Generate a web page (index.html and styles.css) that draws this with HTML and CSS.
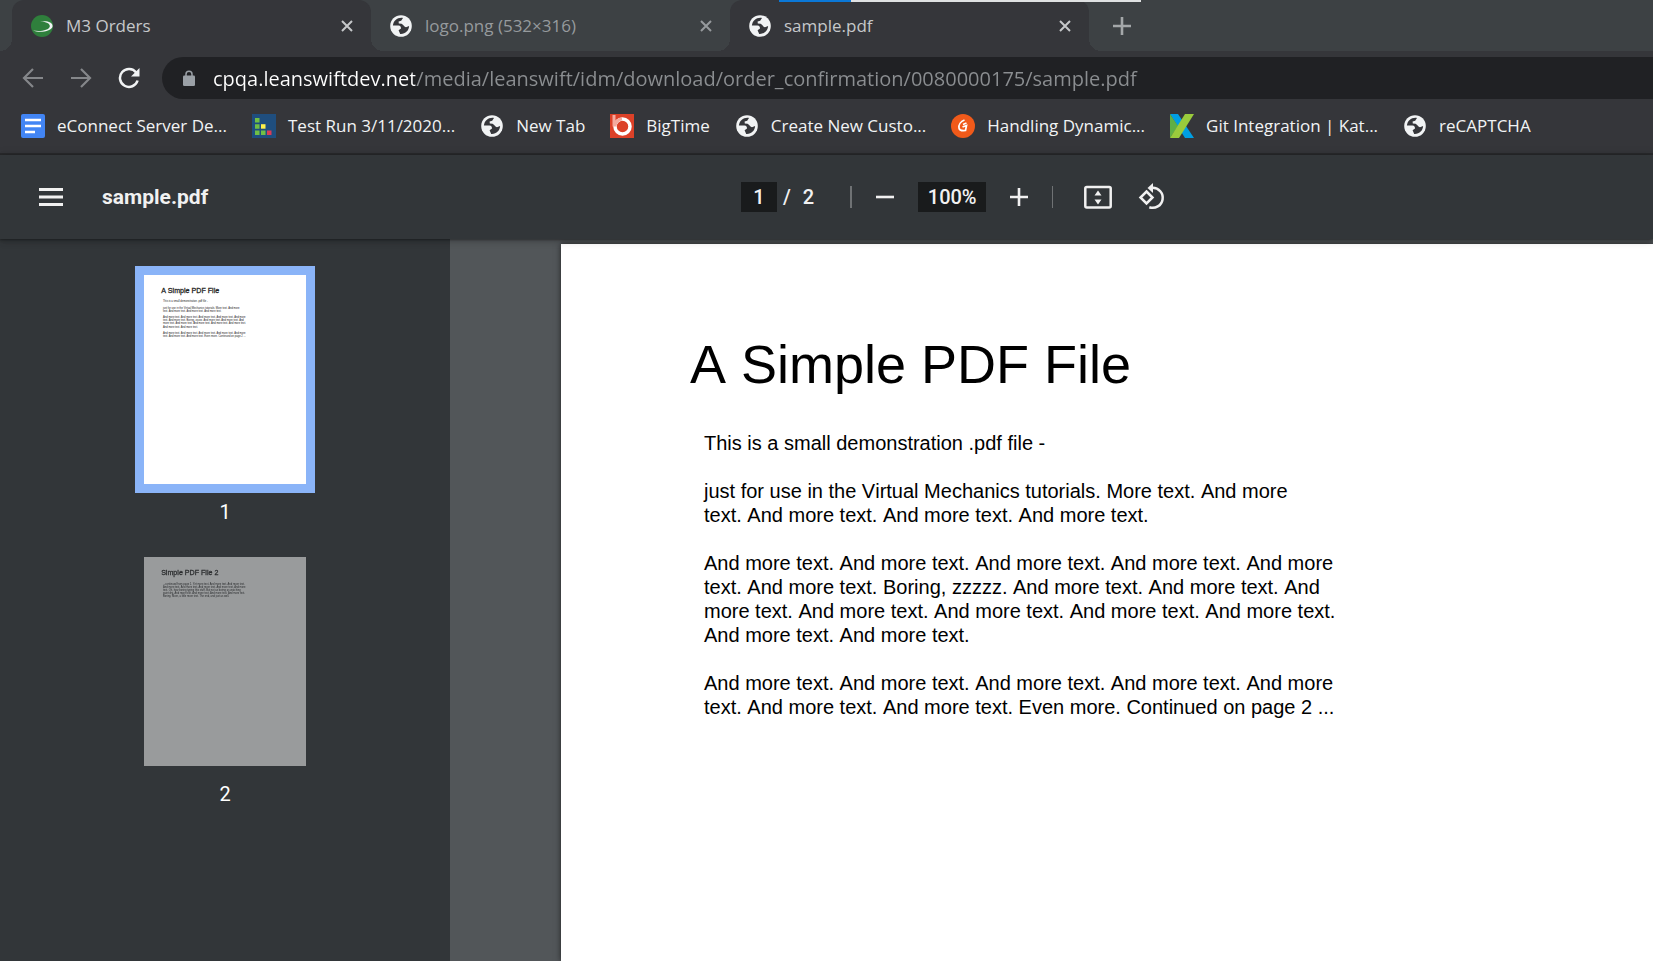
FILE: index.html
```html
<!DOCTYPE html>
<html lang="en">
<head>
<meta charset="utf-8">
<title>sample.pdf</title>
<link rel="stylesheet" href="styles.css">
</head>
<body>
<svg class="defs" aria-hidden="true">
  <symbol id="globe" viewBox="0 0 22 22">
    <circle cx="11" cy="11" r="10.8" fill="#f1f3f4"/>
    <path d="M13 2.900C7.500 2.200 3.500 5.500 2.900 10.600L8.500 10.600C10.500 10.800 11 12 11 13.600L8.600 15.200L10.200 18.900C15.200 19.300 19 15.500 19.100 11L16 12.300C14.200 12.300 13.600 9.600 11.600 8.800L8.800 8.400L8.600 6.600L11.200 5.800Z" fill="#35363a"/>
  </symbol>
  <symbol id="close" viewBox="0 0 12 12"><path d="M1 1 11 11M11 1 1 11" stroke="currentColor" stroke-width="2" fill="none"/></symbol>
</svg>

<header class="browser">
  <div class="progress" aria-hidden="true"><span class="progress-fill"></span></div>
  <nav class="tabs" aria-label="Tabs">
    <div class="tab tab-on">
      <svg class="favicon" viewBox="0 0 22 22"><circle cx="11" cy="11" r="11" fill="#2f7f3c"/><path d="M2 15.5C9 16.8 18 15.5 18.8 11.5C19.200 8 14 6.500 9 6.800C15 5.300 21.800 7 21.600 11.200C21.200 16 9 18.300 2 15.500Z" fill="#f1f3f4"/></svg>
      <span class="tab-title">M3 Orders</span>
      <button class="tab-close" aria-label="Close M3 Orders"><svg><use href="#close"/></svg></button>
    </div>
    <div class="tab tab-off">
      <svg class="favicon"><use href="#globe"/></svg>
      <span class="tab-title">logo.png (532×316)</span>
      <button class="tab-close" aria-label="Close logo.png"><svg><use href="#close"/></svg></button>
    </div>
    <div class="tab tab-on">
      <svg class="favicon"><use href="#globe"/></svg>
      <span class="tab-title">sample.pdf</span>
      <button class="tab-close" aria-label="Close sample.pdf"><svg><use href="#close"/></svg></button>
    </div>
    <button class="new-tab" aria-label="New tab"><svg viewBox="0 0 18 18"><path d="M9 0V18M0 9H18" stroke="currentColor" stroke-width="2.600"/></svg></button>
  </nav>

  <div class="address-row">
    <button class="nav-btn dim" aria-label="Back"><svg viewBox="0 0 22 22"><path d="M21 11H2.500M11 2 2 11 11 20" fill="none" stroke="currentColor" stroke-width="2.200"/></svg></button>
    <button class="nav-btn dim" aria-label="Forward"><svg viewBox="0 0 22 22"><path d="M1 11H19.500M11 2 20 11 11 20" fill="none" stroke="currentColor" stroke-width="2.200"/></svg></button>
    <button class="nav-btn" aria-label="Reload"><svg viewBox="0 0 22 22"><path d="M18.200 5.500A9 9 0 1 0 19.600 13.500" fill="none" stroke="currentColor" stroke-width="2.500"/><path d="M21.500 1V9.500H13Z" fill="currentColor"/></svg></button>
    <div class="omnibox">
      <svg class="lock" viewBox="0 0 12 16"><path d="M3 7V4.200a3 3 0 0 1 6 0V7" fill="none" stroke="#9aa0a6" stroke-width="1.500"/><rect y="5.500" width="12" height="10.500" rx="1.300" fill="#9aa0a6"/></svg>
      <input class="url" type="text" aria-label="Address" value="cpqa.leanswiftdev.net/media/leanswift/idm/download/order_confirmation/0080000175/sample.pdf">
    </div>
  </div>

  <nav class="bookmarks" aria-label="Bookmarks">
    <a class="bookmark" href="#"><svg viewBox="0 0 24 24"><rect width="24" height="24" rx="2" fill="#4285f4"/><path d="M4 6H20M4 12H20M4 18H14" stroke="#fff" stroke-width="2.600"/></svg><span>eConnect Server De...</span></a>
    <a class="bookmark" href="#"><svg viewBox="0 0 24 24"><path d="M0 0H24V24H0Z" fill="#1f4e7e"/><path d="M3 4h4.500v4.500H3ZM3 10.200h4.500v4.500H3ZM3 16.500h4.500V21H3ZM9 16.500h4.500V21H9Z" fill="#71bf44"/><path d="M9 10.200h4.500v4.500H9Z" fill="#fdf04b"/><path d="M15 16.500h4.500V21H15Z" fill="#dc3c55"/></svg><span>Test Run 3/11/2020...</span></a>
    <a class="bookmark" href="#"><svg viewBox="-1 -1 24 24"><use href="#globe" width="22" height="22"/></svg><span>New Tab</span></a>
    <a class="bookmark" href="#"><svg viewBox="0 0 24 24"><path d="M0 0H24V24H0Z" fill="#dc4128"/><circle cx="12.500" cy="12.500" r="7.500" fill="none" stroke="#fff" stroke-width="3.500"/><path d="M4 1V12.500M5 12.500A7.500 7.500 0 0 1 12 5" fill="none" stroke="#f4aa9e" stroke-width="3"/></svg><span>BigTime</span></a>
    <a class="bookmark" href="#"><svg viewBox="-1 -1 24 24"><use href="#globe" width="22" height="22"/></svg><span>Create New Custo...</span></a>
    <a class="bookmark" href="#"><svg viewBox="0 0 24 24"><circle cx="12" cy="12" r="12" fill="#f05a1a"/><path d="M13.500 6C9.500 7.500 7.500 11 8 14C8.500 17 12 16.800 14.500 16.500L15.500 11.500L11.500 13M12 10.500 15.500 9" fill="none" stroke="#fff" stroke-width="1.700"/></svg><span>Handling Dynamic...</span></a>
    <a class="bookmark" href="#"><svg viewBox="0 0 24 24"><path d="M0 0H8L24 24H15Z" fill="#009fe3"/><path d="M0 0 8 12 0 24Z" fill="#5faf46"/><path d="M15 0H24L9 24H0Z" fill="#9acb3c"/></svg><span>Git Integration | Kat...</span></a>
    <a class="bookmark" href="#"><svg viewBox="-1 -1 24 24"><use href="#globe" width="22" height="22"/></svg><span>reCAPTCHA</span></a>
  </nav>
</header>

<div class="pdf-bar">
  <div class="pdf-name">
    <button class="icon-btn" aria-label="Menu"><svg class="icon-24" viewBox="0 0 24 18"><path d="M0 1.500H24M0 9H24M0 16.500H24" stroke="currentColor" stroke-width="3"/></svg></button>
    <h1>sample.pdf</h1>
  </div>
  <div class="pager">
    <input class="field page-field" type="text" aria-label="Page number" value="1">
    <span>/</span><span class="page-count">2</span>
  </div>
  <span class="rule rule-wide"></span>
  <div class="zoomer">
    <button class="icon-btn" aria-label="Zoom out"><svg class="icon-18" viewBox="0 0 18 18"><path d="M0 9H18" stroke="currentColor" stroke-width="2.600"/></svg></button>
    <input class="field zoom-field" type="text" aria-label="Zoom level" value="100%">
    <button class="icon-btn" aria-label="Zoom in"><svg class="icon-18" viewBox="0 0 18 18"><path d="M0 9H18M9 0V18" stroke="currentColor" stroke-width="2.600"/></svg></button>
  </div>
  <span class="rule"></span>
  <div class="fitters">
    <button class="icon-btn" aria-label="Fit to page"><svg class="icon-28" viewBox="0 0 28 28"><rect x="1.300" y="4" width="25.400" height="20.500" rx="1.500" fill="none" stroke="currentColor" stroke-width="2.500"/><path d="M14 7.500 17.500 12.500H10.500ZM14 21.500 17.500 16.500H10.500Z" fill="currentColor"/></svg></button>
    <button class="icon-btn" aria-label="Rotate"><svg class="icon-28" viewBox="0 0 28 28"><path d="M8.500 8.500 14.500 14.500 8.500 20.500 2.500 14.500ZM14.500 4.800A10 10 0 1 1 11.300 24.200" fill="none" stroke="currentColor" stroke-width="2.500"/><path d="M15 0V10L9.500 5Z" fill="currentColor"/></svg></button>
  </div>
</div>

<div class="viewer">
  <aside class="thumbs" aria-label="Pages">
    <button class="thumb thumb-on" aria-label="Page 1">
      <svg class="sheet" viewBox="0 0 612 792">
        <text class="sheet-head" x="64" y="70" font-size="27">A Simple PDF File</text>
        <g font-size="10">
          <text x="71" y="103">This is a small demonstration .pdf file -</text>
          <text x="71" y="127">just for use in the Virtual Mechanics tutorials. More text. And more</text>
          <text x="71" y="139">text. And more text. And more text. And more text.</text>
          <text x="71" y="163">And more text. And more text. And more text. And more text. And more</text>
          <text x="71" y="175">text. And more text. Boring, zzzzz. And more text. And more text. And</text>
          <text x="71" y="187">more text. And more text. And more text. And more text. And more text.</text>
          <text x="71" y="199">And more text. And more text.</text>
          <text x="71" y="223">And more text. And more text. And more text. And more text. And more</text>
          <text x="71" y="235">text. And more text. And more text. Even more. Continued on page 2 ...</text>
        </g>
      </svg>
    </button>
    <span class="thumb-no">1</span>
    <button class="thumb thumb-off" aria-label="Page 2">
      <svg class="sheet" viewBox="0 0 612 792">
        <text class="sheet-head" x="64" y="70" font-size="27">Simple PDF File 2</text>
        <g font-size="10">
          <text x="71" y="105">...continued from page 1. Yet more text. And more text. And more text.</text>
          <text x="71" y="117">And more text. And more text. And more text. And more text. And more</text>
          <text x="71" y="129">text. Oh, how boring typing this stuff. But not as boring as watching</text>
          <text x="71" y="141">paint dry. And more text. And more text. And more text. And more text.</text>
          <text x="71" y="153">Boring. More, a little more text. The end, and just as well.</text>
        </g>
      </svg>
    </button>
    <span class="thumb-no">2</span>
  </aside>
  <main class="canvas">
    <article class="page">
      <h2>A Simple PDF File</h2>
      <p>This is a small demonstration .pdf file -</p>
      <p>just for use in the Virtual Mechanics tutorials. More text. And more<br>text. And more text. And more text. And more text.</p>
      <p>And more text. And more text. And more text. And more text. And more<br>text. And more text. Boring, zzzzz. And more text. And more text. And<br>more text. And more text. And more text. And more text. And more text.<br>And more text. And more text.</p>
      <p>And more text. And more text. And more text. And more text. And more<br>text. And more text. And more text. Even more. Continued on page 2 ...</p>
    </article>
  </main>
</div>
</body>
</html>
```
FILE: styles.css
```css
* { box-sizing: border-box; }
body {
  margin: 0;
  min-height: 100vh;
  display: flex;
  flex-direction: column;
  overflow: hidden;
  background: #525659;
  font-family: "Open Sans", "Noto Sans", sans-serif;
}
button, input { font: inherit; color: inherit; border: 0; padding: 0; background: none; }
button { display: flex; align-items: center; justify-content: center; }
.defs { display: none; }

.browser {
  position: relative;
  background: #35363a;
  border-bottom: 2px solid #292a2c;
}
.progress {
  position: absolute;
  top: 0;
  left: 779px;
  width: 362px;
  height: 2px;
  background: #dfe1e2;
  z-index: 2;
}
.progress-fill { display: block; width: 20%; height: 2px; background: #0b78d7; }

.tabs { display: flex; height: 51px; padding-left: 12px; background: #3d4144; }
.tab {
  position: relative;
  display: flex;
  align-items: center;
  gap: 13px;
  width: 359px;
  padding: 0 18px 0 19px;
  color: #c6c8ca;
  font-size: 17px;
}
.tab-on { background: #35363a; border-radius: 12px 12px 0 0; }
.tab-on::before, .tab-on::after {
  content: "";
  position: absolute;
  bottom: 0;
  width: 12px;
  height: 12px;
}
.tab-on::before { right: 100%; background: radial-gradient(circle at 0 0, #3d4144 12px, #35363a 12px); }
.tab-on::after { left: 100%; background: radial-gradient(circle at 100% 0, #3d4144 12px, #35363a 12px); }
.tab-off { color: #969a9d; }
.favicon { width: 22px; height: 22px; flex: none; }
.tab-title { flex: 1; white-space: nowrap; }
.tab-close svg { width: 12px; height: 12px; }
.new-tab { width: 66px; color: #a4a7a9; }
.new-tab svg { width: 18px; height: 18px; }

.address-row { display: flex; align-items: center; gap: 26px; padding: 6px 0 0 22px; }
.nav-btn { width: 22px; color: #f1f3f4; }
.nav-btn svg { width: 22px; height: 22px; }
.dim { color: #85878a; }
.omnibox {
  flex: 1;
  display: flex;
  align-items: center;
  gap: 18px;
  height: 42px;
  margin-left: -4px;
  padding-left: 21px;
  background: #202124;
  border-radius: 21px 0 0 21px;
}
.lock { width: 12px; height: 16px; }
.url {
  flex: 1;
  height: 42px;
  font-size: 20px;
  color: transparent;
  background: linear-gradient(90deg, #fff 202px, #8b8e91 202px);
  -webkit-background-clip: text;
  background-clip: text;
}

.bookmarks { display: flex; gap: 25px; height: 54px; padding-left: 21px; align-items: center; }
.bookmark { display: flex; align-items: center; gap: 12px; color: #f1f3f4; font-size: 17px; line-height: 24px; text-decoration: none; white-space: nowrap; }
.bookmark svg { width: 24px; height: 24px; flex: none; }

.pdf-bar {
  position: relative;
  z-index: 1;
  display: flex;
  align-items: center;
  height: 84px;
  background: #323639;
  color: #f1f1f1;
  font: 500 20px Roboto, sans-serif;
  box-shadow: 0 -2px 8px rgba(0, 0, 0, .09), 0 4px 8px rgba(0, 0, 0, .06), 0 1px 2px rgba(0, 0, 0, .3), 0 2px 6px rgba(0, 0, 0, .15);
}
.pdf-name { display: flex; align-items: center; gap: 39px; width: 741px; padding-left: 39px; }
.pdf-name h1 { margin: 0; font-size: 21px; font-weight: 700; }
.icon-24 { width: 24px; height: 18px; }
.icon-18 { width: 18px; height: 18px; }
.icon-28 { width: 28px; height: 28px; }
.field { height: 30px; background: #191b1c; text-align: center; }
.page-field { width: 36px; }
.zoom-field { width: 68px; }
.pager { display: flex; align-items: center; gap: 6px; }
.page-count { margin-left: 6px; }
.rule { width: 1px; height: 22px; background: #6f7274; }
.rule-wide { width: 2px; margin-left: 36px; }
.zoomer { display: flex; align-items: center; gap: 24px; padding: 0 24px; }
.fitters { display: flex; align-items: center; gap: 26px; padding-left: 31px; }

.viewer {
  flex: 1;
  display: flex;
  font-family: "Liberation Sans", Arial, sans-serif;
  font-kerning: none;
}
.thumbs {
  display: flex;
  flex-direction: column;
  align-items: center;
  width: 450px;
  padding-top: 27px;
  background: #323639;
}
.thumb { font-family: "Liberation Sans", Arial, sans-serif; border: 9px solid transparent; }
.thumb-on { border-color: #8ab4f8; }
.thumb-off { opacity: .5; margin-top: 17px; }
.sheet { display: block; width: 162px; height: 209px; background: #fff; fill: #222; }
.sheet-head { stroke: #222; stroke-width: 1; }
.thumb-no { color: #fff; font: 20px/38px Roboto, sans-serif; }
.canvas { flex: 1; padding: 5px 0 0 111px; }
.page {
  height: 100%;
  padding: 90px 0 0 143px;
  background: #fff;
  color: #000;
  box-shadow: 0 0 6px rgba(0, 0, 0, .6);
  white-space: nowrap;
  font-size: 20px;
  line-height: 24px;
}
.page h2 { margin: 0 0 37px -14px; font-size: 54px; font-weight: 400; line-height: 60px; }
.page p { margin: 0 0 24px; }
```
